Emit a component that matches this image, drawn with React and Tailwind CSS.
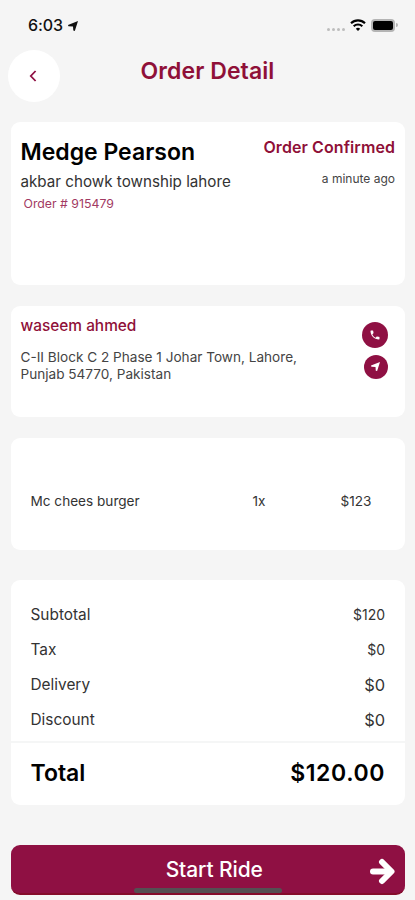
import { MdPhone } from "react-icons/md";

const items = [{ name: "Mc chees burger", qty: "1x", price: "$123" }];

function LocationArrow({ className }) {
  return (
    <svg className={className} viewBox="0 0 10 10" fill="currentColor">
      <path d="M10 0 6.8 10 5.3 9.6 5 5.6 0.4 5.3 0 3.9z" />
    </svg>
  );
}

function StatusBar() {
  return (
    <div className="flex h-[50px] items-start justify-between pt-[15px] pr-[17px] pl-[28px]">
      <div className="flex items-center gap-[5px]">
        <span className="text-[16px] leading-[21px] font-medium tracking-[-0.1px]">6:03</span>
        <LocationArrow className="h-[10px] w-[10px]" />
      </div>
      <div className="flex h-5 items-center">
        <div className="mt-[8px] mr-[5px] flex gap-[2px]">
          <span className="h-[3px] w-[3px] rounded-full bg-[#bdbdbd]" />
          <span className="h-[3px] w-[3px] rounded-full bg-[#bdbdbd]" />
          <span className="h-[3px] w-[3px] rounded-full bg-[#bdbdbd]" />
          <span className="h-[3px] w-[3px] rounded-full bg-[#bdbdbd]" />
        </div>
        <svg className="mr-[5px] h-[12px] w-[16px]" viewBox="0 0 16 12" fill="none" stroke="#000" strokeWidth="2.1">
          <path d="M1 4.2a10 10 0 0 1 14 0" />
          <path d="M3.7 7.2a6.1 6.1 0 0 1 8.6 0" />
          <path d="M8 12 5.8 9.8a3.2 3.2 0 0 1 4.4 0z" fill="#000" stroke="none" />
        </svg>
        <div className="h-[13px] w-[24px] rounded-[4px] border-2 border-[#b4b4b4] bg-black" />
        <div className="ml-px h-[4px] w-[2px] rounded-r-full bg-[#b4b4b4]" />
      </div>
    </div>
  );
}

function Header() {
  return (
    <div className="grid h-[52px] grid-cols-[52px_1fr_52px] px-2">
      <button className="flex h-[52px] w-[52px] items-center justify-center rounded-full bg-white">
        <svg className="mr-[2px] h-[12px] w-[8px]" viewBox="0 0 8 12" fill="none" stroke="#8f1043" strokeWidth="1.8">
          <path d="M6.6 1 1.8 6l4.8 5" />
        </svg>
      </button>
      <h1 className="pt-[6px] text-center text-[23px] leading-[30px] font-semibold tracking-[0.08px] text-[#8f1038]">
        Order Detail
      </h1>
    </div>
  );
}

function SummaryRow({ label, value, small }) {
  return (
    <div className="flex h-[35px] items-center justify-between px-5">
      <span className="text-[15.4px]">{label}</span>
      <span className={small ? "pb-[2px] text-[14px]" : "text-[16.4px]"}>{value}</span>
    </div>
  );
}

function App() {
  return (
    <div className="flex h-[900px] w-[415px] flex-col bg-[#f5f5f5] font-['Inter',sans-serif] text-[#111]">
      <StatusBar />
      <Header />

      <div className="flex flex-col pt-[20px] pr-[10px] pl-[10.5px]">
        <div className="flex h-[162.5px] justify-between rounded-[9px] bg-white px-[10px] pt-[15px]">
          <div>
            <h2 className="text-[23px] leading-[30px] font-semibold text-black">Medge Pearson</h2>
            <p className="mt-[5px] text-[15.2px] leading-[20px] text-[#333]">akbar chowk township lahore</p>
            <p className="mt-[4px] ml-[3px] text-[12.3px] leading-[16px] text-[#a23a62]">Order # 915479</p>
          </div>
          <div className="text-right">
            <p className="text-[16px] leading-[20px] font-semibold tracking-[0.08px] text-[#8f1038]">Order Confirmed</p>
            <p className="mt-[14px] text-[12px] leading-[16px] text-[#444]">a minute ago</p>
          </div>
        </div>

        <div className="mt-[21px] flex h-[111.5px] justify-between rounded-[9px] bg-white pt-[10px] pr-[17px] pl-[10px]">
          <div>
            <h3 className="text-[15.4px] leading-[20px] font-medium text-[#8f1038]">waseem ahmed</h3>
            <p className="mt-[13px] w-[300px] text-[13.6px] leading-[17px] text-[#444]">
              C-II Block C 2 Phase 1 Johar Town, Lahore, Punjab 54770, Pakistan
            </p>
          </div>
          <div className="flex flex-col items-end gap-[7px] pt-[6px]">
            <button className="flex h-[26px] w-[26px] items-center justify-center rounded-full bg-[#8f1043]">
              <MdPhone className="h-[12px] w-[12px] text-white" />
            </button>
            <button className="flex h-[24px] w-[24px] items-center justify-center rounded-full bg-[#8f1043]">
              <LocationArrow className="mr-px h-[9px] w-[9px] text-white" />
            </button>
          </div>
        </div>

        <div className="mt-[20.5px] flex h-[112px] flex-col justify-center rounded-[9px] bg-white pt-[15px] pl-5">
          {items.map((item) => (
            <div key={item.name} className="grid grid-cols-[222px_88px_1fr] text-[13.6px] leading-[18px] text-[#333]">
              <span>{item.name}</span>
              <span>{item.qty}</span>
              <span>{item.price}</span>
            </div>
          ))}
        </div>

        <div className="mt-[30.5px] h-[225px] rounded-[9px] bg-white pt-[17.5px] text-[#333]">
          <SummaryRow label="Subtotal" value="$120" small />
          <SummaryRow label="Tax" value="$0" small />
          <SummaryRow label="Delivery" value="$0" />
          <SummaryRow label="Discount" value="$0" />
          <div className="mt-[3px] flex h-[64px] items-center justify-between border-t-2 border-[#f5f6f6] px-5 text-[23px] font-semibold text-black">
            <span>Total</span>
            <span className="tracking-[0.6px]">$120.00</span>
          </div>
        </div>

        <button className="relative mt-[40px] flex h-[50px] items-center justify-center rounded-[9px] border-b-2 border-[#850c2b] bg-[#8f1043] pt-[2px] pl-[13px] text-[21px] font-medium tracking-[-0.1px] text-white">
          Start Ride
          <svg
            className="absolute top-[13px] right-[9.5px] h-[27px] w-[27px]"
            viewBox="0 0 27 27"
            fill="none"
            stroke="currentColor"
            strokeWidth="6"
            strokeLinecap="round"
            strokeLinejoin="round"
          >
            <path d="M4 13.5h17" />
            <path d="M13 4l9.5 9.5L13 23" />
          </svg>
          <span className="absolute bottom-0 left-[123px] h-[5px] w-[148px] rounded-full bg-[#544f52]" />
        </button>
      </div>
    </div>
  );
}

export default App;
